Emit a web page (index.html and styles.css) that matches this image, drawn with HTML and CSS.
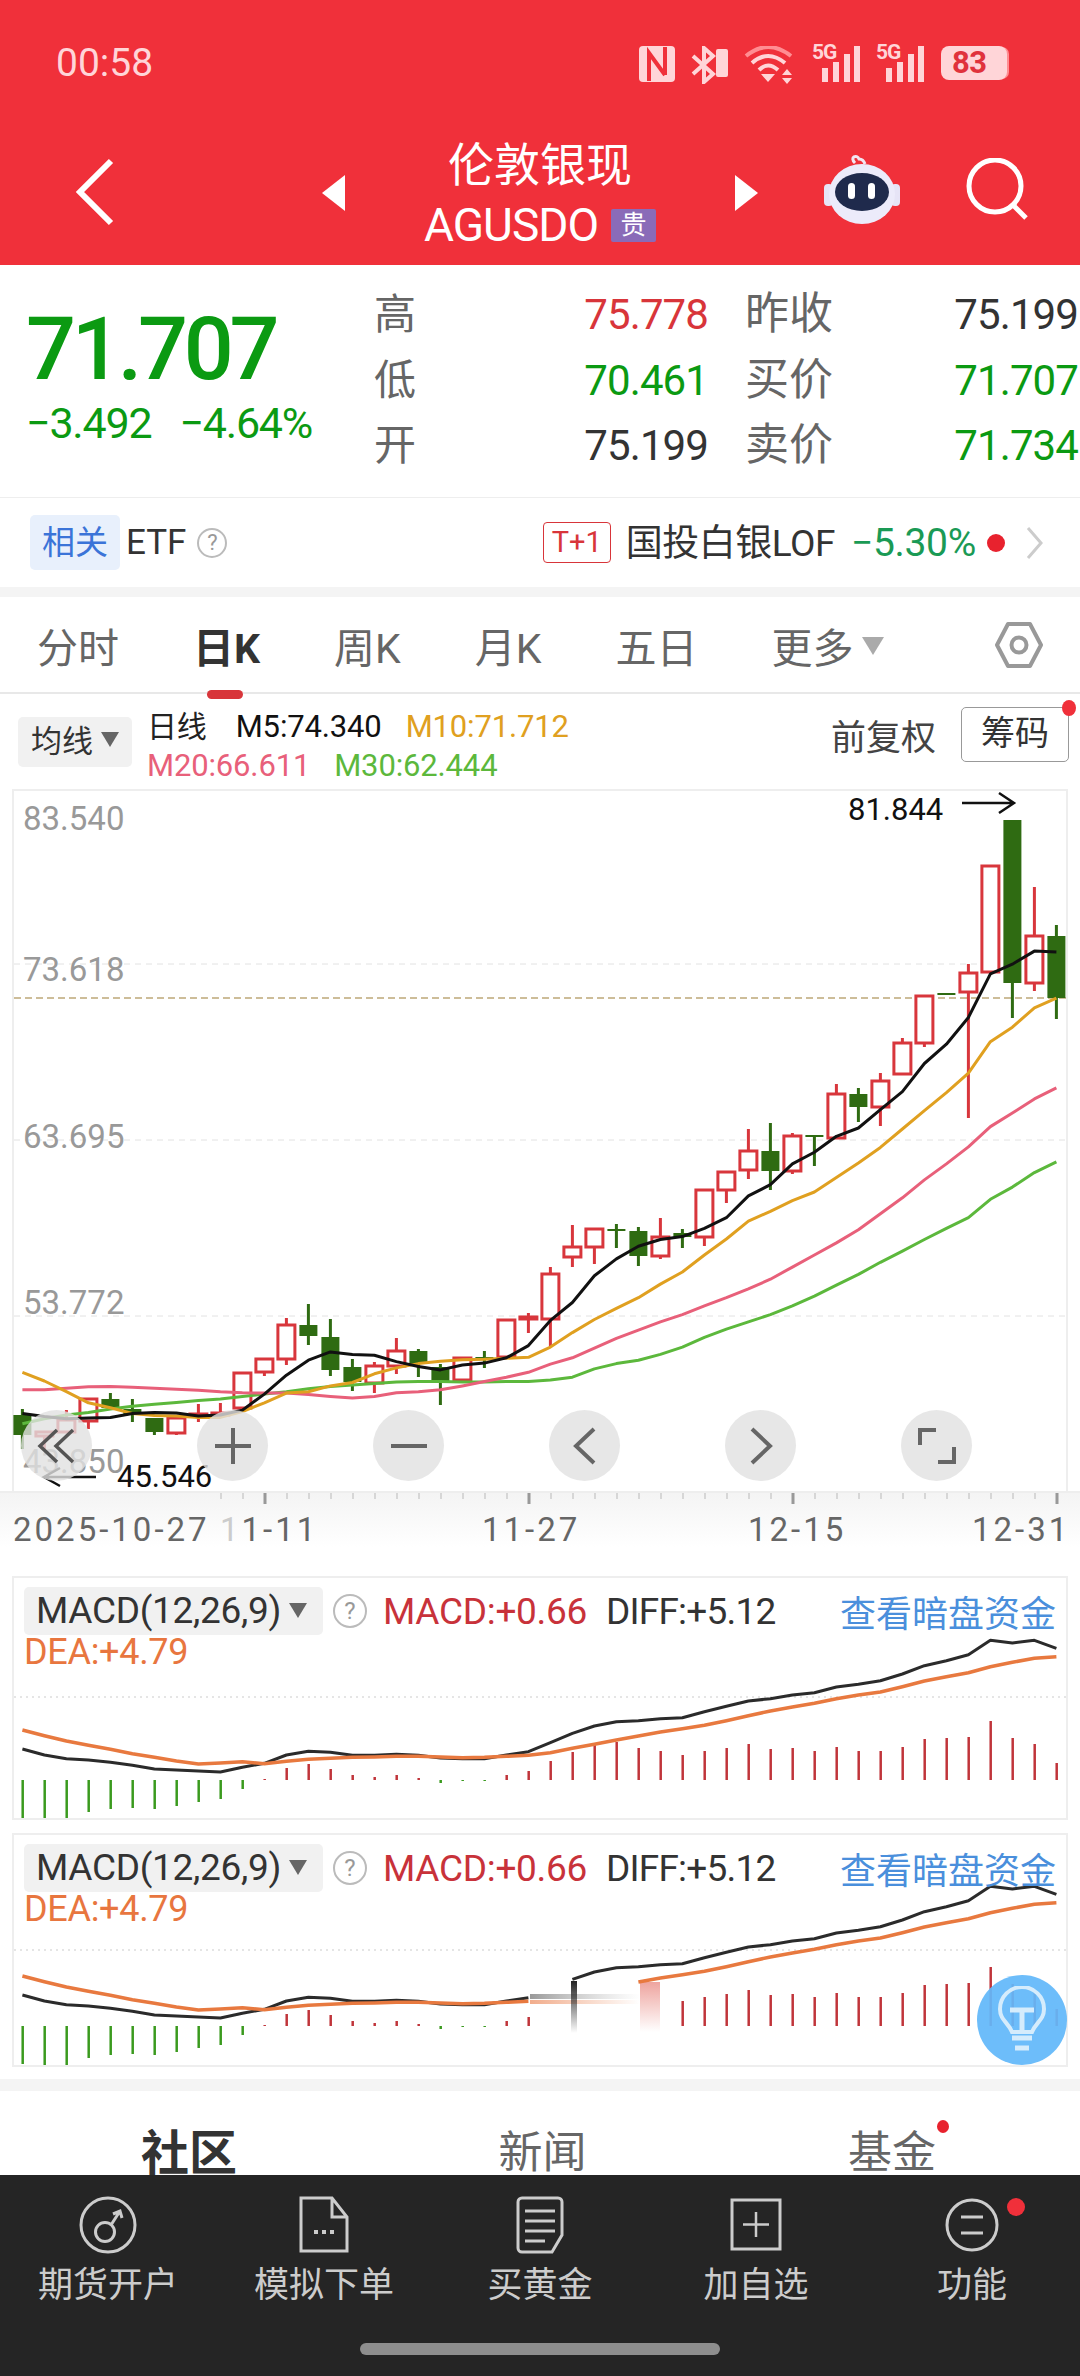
FILE: index.html
```html
<!DOCTYPE html>
<html lang="zh-CN">
<head>
  <meta charset="UTF-8">
  <meta name="viewport" content="width=device-width, initial-scale=1.0">
  <title>伦敦银现 AGUSDO</title>
  <link rel="stylesheet" href="styles.css">
</head>
<body>
<div id="page">

  <header id="top-bar">
    <div class="status-bar">
      <span class="clock">00:58</span>
      <div class="status-icons">
        <svg width="36" height="36" viewBox="0 0 36 36"><rect width="36" height="36" rx="4" fill="#ffd5d8"/><path d="M10 35V7l16 22M26 1v28" fill="none" stroke="#f0303a" stroke-width="4"/></svg>
        <svg width="37" height="38" viewBox="0 0 37 38"><path d="M2 10l20 18-9 8V2l9 8L2 28" fill="none" stroke="#ffd5d8" stroke-width="4"/><rect x="25" y="3" width="12" height="28" rx="2" fill="#ffd5d8"/></svg>
        <svg width="52" height="38" viewBox="0 0 52 38"><path d="M2 10Q24-8 47 10" fill="none" stroke="#ff8d92" stroke-width="4"/><path d="M8 17Q24 3 41 17M15 24Q24 15 34 24" fill="none" stroke="#ffd5d8" stroke-width="4"/><path d="M24 36l-7-8h14zM43 23l5 6H38zM43 38l5-6H38z" fill="#ffd5d8"/></svg>
        <div class="signal"><span class="signal-tag">5G</span><svg width="48" height="36" viewBox="0 0 48 36"><path d="M10 22h6v14h-6zM21 16h6v20h-6zM32 8h6v28h-6zM42 0h6v36h-6z" fill="#ffd5d8"/></svg></div>
        <div class="signal"><span class="signal-tag">5G</span><svg width="48" height="36" viewBox="0 0 48 36"><path d="M10 22h6v14h-6zM21 16h6v20h-6zM32 8h6v28h-6zM42 0h6v36h-6z" fill="#ffd5d8"/></svg></div>
        <div class="battery"><span class="battery-level">83</span></div>
      </div>
    </div>

    <nav class="nav-row">
      <div class="nav-left">
        <svg width="40" height="68" viewBox="0 0 40 68"><path d="M36 3L5 34l31 31" fill="none" stroke="#fff" stroke-width="6"/></svg>
      </div>
      <div class="nav-title">
        <span class="tri tri-left"></span>
        <div class="title-text">
          <h1>伦敦银现</h1>
          <p>AGUSDO<span class="tag-gui">贵</span></p>
        </div>
        <span class="tri tri-right"></span>
      </div>
      <div class="nav-right">
        <svg width="76" height="70" viewBox="0 0 76 70">
          <path d="M31 9c-6-6 2-9 4-4 3 0 5 2 6 5" fill="none" stroke="#f2e6f2" stroke-width="3"/>
          <rect x="0" y="30" width="9" height="22" rx="4" fill="#e6e4f6"/>
          <rect x="67" y="30" width="9" height="22" rx="4" fill="#e6e4f6"/>
          <ellipse cx="38" cy="40" rx="33" ry="30" fill="#ecebfa"/>
          <ellipse cx="38" cy="38" rx="27" ry="19" fill="#1f2a4c"/>
          <rect x="24" y="29" width="7" height="16" rx="3.5" fill="#fff"/>
          <rect x="44" y="29" width="7" height="16" rx="3.5" fill="#fff"/>
        </svg>
        <svg width="64" height="64" viewBox="0 0 64 64"><circle cx="29" cy="28" r="26" fill="none" stroke="#fff" stroke-width="5"/><path d="M47 47l13 13" stroke="#fff" stroke-width="5"/></svg>
      </div>
    </nav>
  </header>

  <section class="quote">
    <div class="quote-main">
      <div class="price">71.707</div>
      <div class="change"><span>−3.492</span><span>−4.64%</span></div>
    </div>
    <div class="quote-table">
      <span class="q-label">高</span><span class="q-val up">75.778</span>
      <span class="q-label q-label-2">昨收</span><span class="q-val">75.199</span>
      <span class="q-label">低</span><span class="q-val down">70.461</span>
      <span class="q-label q-label-2">买价</span><span class="q-val down">71.707</span>
      <span class="q-label">开</span><span class="q-val">75.199</span>
      <span class="q-label q-label-2">卖价</span><span class="q-val down">71.734</span>
    </div>
  </section>

  <section class="etf-row">
    <span class="etf-tag">相关</span>
    <span class="etf-name">ETF</span>
    <span class="help">?</span>
    <div class="etf-right">
      <span class="t1">T+1</span>
      <span class="fund-name">国投白银LOF</span>
      <span class="fund-pct">−5.30%</span>
      <span class="red-dot"></span>
      <svg width="18" height="34" viewBox="0 0 18 34"><path d="M2 2l13 15L2 32" fill="none" stroke="#ccc" stroke-width="3"/></svg>
    </div>
  </section>

  <div class="band"></div>

  <div class="period-tabs">
    <span class="period">分时</span>
    <span class="period active">日K</span>
    <span class="period">周K</span>
    <span class="period">月K</span>
    <span class="period">五日</span>
    <span class="period">更多<i class="caret"></i></span>
    <svg class="hex" width="48" height="46" viewBox="0 0 48 46"><path d="M13 2h22l11 21-11 21H13L2 23z" fill="none" stroke="#999" stroke-width="4" stroke-linejoin="round"/><circle cx="24" cy="23" r="7.5" fill="none" stroke="#999" stroke-width="4"/></svg>
  </div>

  <div class="ma-row">
    <div class="ma-chip">均线<i class="caret caret-dark"></i></div>
    <div class="ma-values">
      <div><span class="ma-day">日线</span><span class="m5">M5:74.340</span><span class="m10">M10:71.712</span></div>
      <div><span class="m20">M20:66.611</span><span class="m30">M30:62.444</span></div>
    </div>
    <div class="ma-right">
      <span class="fq">前复权</span>
      <span class="chips-btn">筹码</span>
    </div>
  </div>

  <div class="kline-frame">
    <svg id="kline" viewBox="14 791 1052 700">
      <g class="grid-lines">
        <path d="M14 964H1066M14 1140H1066M14 1316H1066"/>
      </g>
      <path class="last-line" d="M14 998H1066"/>
      <g id="candles"></g>
      <g id="ma-lines"></g>
      <text class="axis-price" x="23" y="830">83.540</text>
      <text class="axis-price" x="23" y="981">73.618</text>
      <text class="axis-price" x="23" y="1148">63.695</text>
      <text class="axis-price" x="23" y="1314">53.772</text>
      <text class="axis-price" x="23" y="1473">43.850</text>
      <text class="mark" x="848" y="820">81.844</text>
      <path class="mark-arrow" d="M962 803H1013M999 793l15 10-15 10"/>
      <text class="mark" x="117" y="1487">45.546</text>
      <path class="mark-arrow" d="M96 1477H44M60 1468l-16 9 16 9"/>
    </svg>
    <div class="chart-tools">
      <span class="tool"><svg width="40" height="40" viewBox="0 0 40 40"><path d="M20 4L3 20l17 16M36 4L19 20l17 16" fill="none" stroke="#555" stroke-width="3.5"/></svg></span>
      <span class="tool"><svg width="36" height="36" viewBox="0 0 36 36"><path d="M0 18H36M18 0V36" stroke="#666" stroke-width="4"/></svg></span>
      <span class="tool"><svg width="36" height="36" viewBox="0 0 36 36"><path d="M0 18H36" stroke="#666" stroke-width="4"/></svg></span>
      <span class="tool"><svg width="24" height="38" viewBox="0 0 24 38"><path d="M21 2L3 19l18 17" fill="none" stroke="#666" stroke-width="4"/></svg></span>
      <span class="tool"><svg width="24" height="38" viewBox="0 0 24 38"><path d="M3 2l18 17L3 36" fill="none" stroke="#666" stroke-width="4"/></svg></span>
      <span class="tool"><svg width="38" height="38" viewBox="0 0 38 38"><path d="M2 18V3H18M36 20V35H20" fill="none" stroke="#666" stroke-width="4"/></svg></span>
    </div>
  </div>

  <div class="x-axis">
    <svg id="ticks" width="1080" height="12" viewBox="0 0 1080 12"></svg>
    <div class="x-labels">
      <span>2025-10-27</span>
      <span><em>1</em>1-11</span>
      <span>11-27</span>
      <span>12-15</span>
      <span>12-31</span>
    </div>
  </div>

  <section class="macd-panel macd-first">
    <svg id="macd1" class="macd-svg" viewBox="14 1578 1052 240">
      <path class="dots" d="M14 1697H1066"/>
    </svg>
    <div class="macd-head">
      <span class="macd-chip">MACD(12,26,9)<i class="caret caret-dark"></i></span>
      <span class="help help-big">?</span>
      <span class="macd-val">MACD:+0.66</span>
      <span class="diff-val">DIFF:+5.12</span>
      <span class="dark-link">查看暗盘资金</span>
    </div>
    <div class="dea-val">DEA:+4.79</div>
  </section>

  <section class="macd-panel macd-second">
    <svg id="macd2" class="macd-svg" viewBox="14 1835 1052 230">
      <defs>
        <linearGradient id="fade-right" x1="0" x2="1" y1="0" y2="0"><stop offset="0" stop-color="#555" stop-opacity=".6"/><stop offset="1" stop-color="#999" stop-opacity="0"/></linearGradient>
        <linearGradient id="fade-orange" x1="0" x2="1" y1="0" y2="0"><stop offset="0" stop-color="#e8763f" stop-opacity=".6"/><stop offset="1" stop-color="#e8763f" stop-opacity="0"/></linearGradient>
        <linearGradient id="fade-black" x1="0" x2="0" y1="0" y2="1"><stop offset="0" stop-color="#222"/><stop offset="1" stop-color="#222" stop-opacity="0"/></linearGradient>
        <linearGradient id="fade-red" x1="0" x2="0" y1="0" y2="1"><stop offset="0" stop-color="#e05a50" stop-opacity=".55"/><stop offset="1" stop-color="#e05a50" stop-opacity="0"/></linearGradient>
      </defs>
      <path class="dots" d="M14 1950H1066"/>
      <rect x="530" y="1994" width="110" height="5" fill="url(#fade-right)"/>
      <rect x="530" y="2000" width="110" height="4" fill="url(#fade-orange)"/>
      <rect x="571" y="1981" width="6" height="52" fill="url(#fade-black)"/>
      <rect x="640" y="1982" width="20" height="50" fill="url(#fade-red)"/>
    </svg>
    <div class="macd-head">
      <span class="macd-chip">MACD(12,26,9)<i class="caret caret-dark"></i></span>
      <span class="help help-big">?</span>
      <span class="macd-val">MACD:+0.66</span>
      <span class="diff-val">DIFF:+5.12</span>
      <span class="dark-link">查看暗盘资金</span>
    </div>
    <div class="dea-val">DEA:+4.79</div>
    <div class="bulb">
      <svg width="48" height="68" viewBox="0 0 48 68"><path d="M14 46C10 36 2 34 2 23a22 22 0 0 1 44 0c0 11-8 13-12 23z" fill="none" stroke="#d5ecfc" stroke-width="4"/><path d="M12 24H36M24 24V46M14 52H34M17 62H31" fill="none" stroke="#d5ecfc" stroke-width="5"/></svg>
    </div>
  </section>

  <div class="band band-lower"></div>

  <div class="info-tabs">
    <span class="info-tab active">社区</span>
    <span class="info-tab">新闻</span>
    <span class="info-tab has-dot">基金</span>
  </div>

  <footer id="bottom-bar">
    <div class="actions">
      <div class="action">
        <svg width="60" height="60" viewBox="0 0 60 60"><circle cx="30" cy="30" r="27" fill="none" stroke="#ccc" stroke-width="3"/><circle cx="27" cy="37" r="9.5" fill="none" stroke="#ccc" stroke-width="3"/><path d="M33 30l9-14M35 19l7-3 2 7" fill="none" stroke="#ccc" stroke-width="3"/></svg>
        <span>期货开户</span>
      </div>
      <div class="action">
        <svg width="60" height="60" viewBox="0 0 60 60"><path d="M7 3H38L53 22V56H7zM38 3V22H53" fill="none" stroke="#ccc" stroke-width="3"/><path d="M20 35h4v4h-4zM28 35h4v4h-4zM36 35h4v4h-4z" fill="#ccc"/></svg>
        <span>模拟下单</span>
      </div>
      <div class="action">
        <svg width="60" height="60" viewBox="0 0 60 60"><path d="M12 3H48a4 4 0 0 1 4 4V40L42 57H12a4 4 0 0 1-4-4V7a4 4 0 0 1 4-4z" fill="none" stroke="#ccc" stroke-width="3"/><path d="M15 16H45M15 26H45M15 36H45M15 46H35" stroke="#ccc" stroke-width="3"/></svg>
        <span>买黄金</span>
      </div>
      <div class="action">
        <svg width="60" height="60" viewBox="0 0 60 60"><rect x="6" y="5" width="48" height="49" fill="none" stroke="#ccc" stroke-width="3"/><path d="M30 17V42M17 29.500H43" stroke="#ccc" stroke-width="2.500"/></svg>
        <span>加自选</span>
      </div>
      <div class="action has-alert">
        <svg width="60" height="60" viewBox="0 0 60 60"><circle cx="30" cy="30" r="25" fill="none" stroke="#ccc" stroke-width="3"/><path d="M19 22H41M19 38H41" stroke="#ccc" stroke-width="3"/></svg>
        <span>功能</span>
      </div>
    </div>
    <div class="home-bar"></div>
  </footer>

</div>
<script src="script.js"></script>
</body>
</html>
```

FILE: styles.css
```css
* {
  margin: 0;
  padding: 0;
  box-sizing: border-box;
}

html, body {
  background: #fff;
}

body {
  font-family: Roboto, "Noto Sans CJK SC", sans-serif;
  color: #333;
}

#page {
  width: 1080px;
  height: 2376px;
  overflow: hidden;
  position: relative;
}

/* red header */
#top-bar {
  height: 265px;
  background: #f0303a;
  color: #fff;
}

.status-bar {
  height: 127px;
  display: flex;
  justify-content: space-between;
  align-items: flex-start;
  padding: 40px 73px 0 56px;
}

.clock {
  font-size: 39px;
  line-height: 46px;
  color: #ffd5d8;
}

.status-icons {
  display: flex;
  align-items: flex-start;
  gap: 16px;
  padding-top: 6px;
}

.signal {
  position: relative;
  width: 48px;
  height: 36px;
}

.signal-tag {
  position: absolute;
  left: 0;
  top: -5px;
  font-size: 21px;
  font-weight: 700;
  line-height: 22px;
  letter-spacing: -1px;
  color: #ffd5d8;
}

.battery {
  width: 66px;
  height: 34px;
  background: #ffd5d8;
  border-radius: 8px;
  display: flex;
  align-items: center;
  padding-left: 11px;
  margin-left: 1px;
  box-shadow: 3px 0 0 -1px #ff8d92;
}

.battery-level {
  font-size: 31px;
  font-weight: 700;
  line-height: 34px;
  letter-spacing: -.500px;
  color: #e0323c;
}

.nav-row {
  height: 138px;
  display: grid;
  grid-template-columns: 322px 436px 322px;
}

.nav-left {
  padding: 31px 0 0 75px;
}

.nav-title {
  display: flex;
  justify-content: space-between;
  align-items: flex-start;
}

.tri {
  width: 0;
  height: 0;
  margin-top: 48px;
  border-top: 18px solid transparent;
  border-bottom: 18px solid transparent;
}

.tri-left {
  border-right: 23px solid #fff;
}

.tri-right {
  border-left: 23px solid #fff;
}

.title-text {
  text-align: center;
  margin-top: 7px;
}

.title-text h1 {
  font-size: 46px;
  font-weight: 400;
  line-height: 62px;
  letter-spacing: 0;
}

.title-text p {
  display: flex;
  align-items: center;
  font-size: 46px;
  line-height: 58px;
  letter-spacing: -1px;
}

.tag-gui {
  width: 45px;
  height: 33px;
  margin-left: 13px;
  background: #8a6bb8;
  border-radius: 2px;
  font-size: 26px;
  line-height: 33px;
  text-align: center;
  letter-spacing: 0;
}

.nav-right {
  display: flex;
  align-items: flex-start;
  padding: 27px 0 0 66px;
  gap: 66px;
}

.nav-right svg:last-child {
  margin-top: 4px;
}

/* quote block */
.quote {
  height: 232px;
  display: flex;
}

.quote-main {
  width: 374px;
  padding: 44px 0 0 26px;
}

.price {
  font-size: 88px;
  font-weight: 500;
  line-height: 80px;
  letter-spacing: -4.200px;
  color: #0b9a12;
}

.change {
  display: flex;
  gap: 28px;
  margin-top: 9px;
  font-size: 43px;
  line-height: 50px;
  letter-spacing: -1.200px;
  color: #0b9a12;
}

.quote-table {
  display: grid;
  grid-template-columns: 100px 234px 137px 233px;
  grid-auto-rows: 65.500px;
  padding-top: 17px;
  align-items: center;
}

.q-label {
  font-size: 42px;
  color: #666;
  line-height: 65px;
}

.q-label-2 {
  padding-left: 37px;
  font-size: 44px;
  white-space: nowrap;
}

.q-val {
  justify-self: end;
  font-size: 42px;
  letter-spacing: -.900px;
  color: #333;
}

.q-val.up {
  color: #d8353a;
}

.q-val.down {
  color: #0b9a12;
}

/* etf row */
.etf-row {
  height: 90px;
  display: flex;
  align-items: center;
  padding-left: 30px;
  border-top: 1px solid #eee;
}

.etf-tag {
  width: 90px;
  height: 55px;
  background: #e8f0fc;
  border-radius: 5px;
  color: #3b74d8;
  font-size: 33px;
  line-height: 55px;
  text-align: center;
}

.etf-name {
  margin-left: 6px;
  font-size: 35px;
}

.help {
  width: 30px;
  height: 30px;
  margin-left: 11px;
  border: 2px solid #bbb;
  border-radius: 50%;
  color: #999;
  font-size: 22px;
  line-height: 26px;
  text-align: center;
}

.etf-right {
  margin-left: auto;
  padding-right: 36px;
  display: flex;
  align-items: center;
}

.t1 {
  width: 68px;
  height: 41px;
  border: 1.500px solid #d8353a;
  border-radius: 4px;
  color: #d8353a;
  font-size: 29px;
  line-height: 38px;
  text-align: center;
}

.fund-name {
  margin: 0 0 5px 15px;
  font-size: 37px;
  letter-spacing: -.500px;
}

.fund-pct {
  margin-left: 16px;
  font-size: 39px;
  letter-spacing: -.300px;
  color: #1a9a55;
}

.red-dot {
  width: 18px;
  height: 18px;
  margin: 0 21px 0 11px;
  border-radius: 50%;
  background: #e8222e;
}

.band {
  height: 10px;
  background: #f4f4f4;
}

/* period tabs */
.period-tabs {
  height: 97px;
  display: flex;
  align-items: center;
  gap: 74px;
  padding: 0 37px 0 37px;
  border-bottom: 2px solid #e8e8e8;
}

.period {
  position: relative;
  font-size: 41px;
  color: #666;
  white-space: nowrap;
}

.period.active {
  color: #333;
  font-weight: 700;
}

.period.active::after {
  content: "";
  position: absolute;
  left: 14px;
  bottom: -24px;
  width: 36px;
  height: 9px;
  border-radius: 5px;
  background: #d8353a;
}

.caret {
  display: inline-block;
  width: 0;
  height: 0;
  margin-left: 8px;
  vertical-align: 8px;
  border-left: 11px solid transparent;
  border-right: 11px solid transparent;
  border-top: 18px solid #aaa;
}

.caret-dark {
  border-left-width: 9px;
  border-right-width: 9px;
  border-top: 15px solid #666;
  vertical-align: 5px;
}

.hex {
  margin-left: auto;
  margin-right: -3px;
  position: relative;
  left: -3px;
}

/* moving average row */
.ma-row {
  height: 95px;
  display: flex;
  align-items: flex-start;
  padding-left: 18px;
}

.ma-chip {
  width: 114px;
  height: 50px;
  margin-top: 23px;
  background: #f1f1f1;
  border-radius: 5px;
  font-size: 31px;
  line-height: 50px;
  text-align: center;
  white-space: nowrap;
}

.ma-values {
  margin-left: 15px;
  padding-top: 13px;
  font-size: 31px;
  line-height: 39px;
  letter-spacing: -.150px;
}

.ma-values div {
  display: flex;
}

.ma-day {
  margin-right: 29px;
  font-size: 30px;
  color: #222;
}

.m5 {
  margin-right: 24px;
  color: #111;
}

.m10 {
  color: #e0a020;
}

.m20 {
  margin-right: 24px;
  color: #e8607a;
}

.m30 {
  color: #5cb83c;
}

.ma-right {
  margin-left: auto;
  display: flex;
  align-items: center;
  padding: 13px 11px 0 0;
}

.fq {
  font-size: 35px;
  color: #444;
  margin-right: 25px;
}

.chips-btn {
  position: relative;
  width: 108px;
  height: 55px;
  border: 1.500px solid #999;
  border-radius: 5px;
  font-size: 34px;
  line-height: 51px;
  text-align: center;
}

.chips-btn::after {
  content: "";
  position: absolute;
  right: -8px;
  top: -8px;
  width: 14px;
  height: 16px;
  border-radius: 50%;
  background: #f0303a;
}

/* kline chart */
.kline-frame {
  position: relative;
  height: 702px;
  margin: 0 12px 0 12px;
  border: 2px solid #eee;
  border-bottom: none;
}

#kline {
  display: block;
  width: 100%;
  height: 100%;
  overflow: visible;
}

.grid-lines path {
  stroke: #e2e2e2;
  stroke-width: 1;
  stroke-dasharray: 6 5;
  fill: none;
}

.last-line {
  stroke: #bda878;
  stroke-width: 1.500;
  stroke-dasharray: 7 4;
  fill: none;
}

.axis-price {
  font-size: 33px;
  fill: #999;
}

.mark {
  font-size: 31px;
  fill: #111;
}

.mark-arrow {
  fill: none;
  stroke: #111;
  stroke-width: 2.500;
}

.chart-tools {
  position: absolute;
  left: 7px;
  bottom: 10px;
  display: flex;
  gap: 105px;
}

.tool {
  width: 71px;
  height: 71px;
  border-radius: 50%;
  background: rgba(225, 225, 225, .8);
  display: flex;
  align-items: center;
  justify-content: center;
}

/* date axis */
.x-axis {
  height: 85px;
  background: linear-gradient(#f4f4f4, #fff 65%);
  border-top: 2px solid #eee;
}

#ticks {
  display: block;
}

.x-labels {
  display: grid;
  grid-template-columns: 207px 262px 266px 224px auto;
  padding: 5px 0 0 13px;
  font-size: 33px;
  line-height: 40px;
  letter-spacing: 3px;
  color: #666;
  white-space: nowrap;
}

.x-labels em {
  font-style: normal;
  color: #ccc;
}

/* macd panels */
.macd-panel {
  position: relative;
  margin: 0 12px;
  padding: 9px 0 0 10px;
  border: 2px solid #eee;
}

.macd-first {
  height: 244px;
}

.macd-second {
  height: 234px;
  margin-top: 13px;
}

.macd-svg {
  position: absolute;
  left: 0;
  top: 0;
  width: 100%;
  height: 100%;
}

.macd-svg .dots {
  stroke: #ddd;
  stroke-width: 1.500;
  stroke-dasharray: 2 4;
  fill: none;
}

.macd-head {
  position: relative;
  display: flex;
  align-items: center;
  height: 48px;
}

.macd-chip {
  width: 299px;
  height: 48px;
  padding-left: 12px;
  background: #f1f1f1;
  border-radius: 5px;
  font-size: 37px;
  line-height: 48px;
  letter-spacing: -.300px;
  white-space: nowrap;
}

.help-big {
  width: 34px;
  height: 34px;
  margin-left: 10px;
  font-size: 24px;
  line-height: 30px;
  flex-shrink: 0;
}

.macd-val {
  margin-left: 16px;
  font-size: 37px;
  color: #c8323a;
  letter-spacing: -.300px;
  white-space: nowrap;
}

.diff-val {
  margin-left: 19px;
  font-size: 37px;
  color: #333;
  letter-spacing: -.800px;
  white-space: nowrap;
}

.dark-link {
  margin-left: auto;
  margin-right: 10px;
  font-size: 36px;
  color: #4a8fdc;
  white-space: nowrap;
}

.dea-val {
  position: relative;
  margin-top: -5px;
  font-size: 36px;
  line-height: 44px;
  letter-spacing: -.300px;
  color: #e8763f;
}

.bulb {
  position: absolute;
  right: -1px;
  bottom: 0;
  width: 90px;
  height: 90px;
  border-radius: 50%;
  background: rgba(98, 184, 250, .93);
  display: flex;
  align-items: center;
  justify-content: center;
}

.band-lower {
  height: 12px;
  margin-top: 12px;
}

/* bottom tabs */
.info-tabs {
  height: 84px;
  overflow: hidden;
  display: grid;
  grid-template-columns: 374px 360px 346px;
  padding-top: 40px;
}

.info-tab {
  position: relative;
  justify-self: center;
  font-size: 44px;
  line-height: 44px;
  color: #666;
}

.info-tab:first-child {
  justify-self: end;
  margin-right: 137px;
}

.info-tab:nth-child(2) {
  margin-left: -23px;
}

.info-tab:nth-child(3) {
  justify-self: start;
  margin-left: 114px;
}

.info-tab.active {
  font-weight: 700;
  font-size: 48px;
  line-height: 48px;
  margin-top: -1px;
  color: #333;
}

.info-tab.has-dot::after {
  content: "";
  position: absolute;
  right: -13px;
  top: -11px;
  width: 12px;
  height: 13px;
  border-radius: 50%;
  background: #e8222e;
}

#bottom-bar {
  height: 201px;
  background: #252525;
}

.actions {
  display: grid;
  grid-template-columns: repeat(5, 216px);
  padding-top: 20px;
}

.action {
  position: relative;
  display: flex;
  flex-direction: column;
  align-items: center;
  color: #ccc;
  font-size: 35px;
  line-height: 50px;
}

.action span {
  margin-top: 6px;
}

.has-alert::after {
  content: "";
  position: absolute;
  left: 143px;
  top: 3px;
  width: 18px;
  height: 18px;
  border-radius: 50%;
  background: #f0303a;
}

.home-bar {
  width: 360px;
  height: 12px;
  margin: 32px auto 0;
  border-radius: 6px;
  background: #8e8e8e;
}
```

FILE: script.js
```js
// x of candle number i, same spacing in all the charts
const xAt = i => 22.4 + 22 * i;

const RED = '#d8363c';
const GREEN = '#2f6b12';

// up?, wick top, body top, body bottom, wick bottom
const candles = [
  [0, 1409, 1415, 1435, 1449], [1, 1432, 1432, 1436, 1449], [1, 1410, 1420, 1432, 1432], [1, 1399, 1399, 1421, 1429],
  [0, 1393, 1399, 1408, 1408], [0, 1399, 1409, 1415, 1422], [0, 1418, 1418, 1432, 1435], [1, 1418, 1418, 1433, 1435],
  [1, 1404, 1414, 1416, 1422], [1, 1403, 1413, 1415, 1416], [1, 1373, 1373, 1408, 1408], [1, 1359, 1359, 1372, 1376],
  [1, 1318, 1325, 1359, 1365], [0, 1304, 1325, 1336, 1345], [0, 1319, 1337, 1370, 1376], [0, 1359, 1367, 1382, 1391],
  [1, 1362, 1366, 1383, 1393], [1, 1338, 1351, 1366, 1374], [0, 1349, 1351, 1364, 1377], [0, 1364, 1367, 1381, 1405],
  [1, 1358, 1358, 1380, 1383], [0, 1351, 1357, 1359, 1368], [1, 1320, 1320, 1357, 1357], [1, 1313, 1317, 1319, 1333],
  [1, 1267, 1274, 1319, 1346], [1, 1225, 1247, 1257, 1267], [1, 1229, 1229, 1247, 1264], [0, 1224, 1229, 1230, 1248],
  [0, 1227, 1231, 1256, 1266], [1, 1218, 1237, 1256, 1259], [0, 1229, 1233, 1237, 1248], [1, 1190, 1190, 1237, 1246],
  [1, 1172, 1172, 1190, 1203], [1, 1129, 1151, 1170, 1179], [0, 1123, 1151, 1171, 1190], [1, 1133, 1136, 1171, 1174],
  [0, 1135, 1135, 1137, 1166], [1, 1084, 1094, 1138, 1138], [0, 1088, 1094, 1107, 1122], [1, 1073, 1081, 1107, 1126],
  [1, 1038, 1043, 1074, 1074], [1, 996, 996, 1043, 1047], [0, 993, 993, 995, 995], [1, 964, 973, 992, 1118],
  [1, 866, 866, 972, 972], [0, 820, 820, 983, 1018], [1, 887, 936, 983, 991], [0, 925, 936, 998, 1019]
];

// read off at 0.4847px per unit from y = 780
const maLines = {
  '#5cb83c': [1328, 1318, 1310, 1305, 1298, 1292, 1288, 1284, 1280, 1277, 1272, 1267, 1262, 1256, 1251, 1248, 1245, 1242, 1241, 1241, 1242, 1242, 1241, 1241, 1238, 1232, 1215, 1204, 1197, 1185, 1170, 1150, 1133, 1118, 1103, 1085, 1065, 1042, 1020, 995, 972, 948, 925, 903, 865, 840, 810, 788],
  '#e8607a': [1258, 1258, 1255, 1252, 1251, 1253, 1255, 1257, 1259, 1262, 1264, 1265, 1265, 1268, 1272, 1275, 1272, 1264, 1262, 1258, 1250, 1241, 1232, 1222, 1205, 1192, 1172, 1152, 1135, 1118, 1103, 1085, 1068, 1050, 1030, 1005, 980, 955, 928, 895, 862, 825, 792, 757, 715, 687, 658, 635],
  '#e0a020': [1222, 1240, 1262, 1285, 1295, 1307, 1311, 1312, 1315, 1315, 1303, 1285, 1265, 1262, 1250, 1243, 1225, 1213, 1204, 1199, 1196, 1195, 1193, 1191, 1170, 1140, 1113, 1090, 1068, 1040, 1015, 980, 947, 910, 890, 868, 850, 820, 790, 758, 720, 682, 645, 605, 540, 510, 470, 450],
  '#111': [1307, 1313, 1318, 1316, 1315, 1307, 1305, 1306, 1312, 1310, 1300, 1267, 1228, 1197, 1180, 1185, 1187, 1200, 1210, 1217, 1207, 1203, 1192, 1167, 1115, 1078, 1023, 988, 962, 948, 942, 925, 903, 858, 835, 792, 768, 735, 718, 680, 643, 585, 545, 490, 400, 380, 353, 355]
};

// macd values are px from the baseline, + up
const macdBars = [-38, -40, -39, -32, -29, -28, -29, -26, -22, -19, -9, 1, 12, 16, 11, 5, 3, 5, 2, -3, -1, -1, 5, 9, 19, 28, 36, 38, 32, 29, 25, 29, 32, 36, 31, 32, 29, 33, 29, 29, 33, 41, 42, 43, 59, 42, 36, 17];
const diffLine = [567, 585, 596, 600, 607, 616, 627, 630, 633, 636, 622, 610, 585, 574, 577, 586, 586, 583, 586, 594, 596, 596, 585, 575, 548, 520, 498, 485, 482, 476, 473, 455, 439, 423, 416, 405, 398, 381, 373, 362, 342, 317, 302, 284, 241, 249, 241, 265];
const deaLine = [510, 527, 543, 556, 568, 581, 592, 603, 612, 609, 605, 611, 604, 598, 595, 592, 591, 589, 589, 591, 593, 592, 589, 586, 578, 565, 553, 540, 528, 516, 506, 496, 482, 467, 453, 441, 430, 416, 405, 396, 380, 363, 350, 338, 320, 307, 295, 290];

function polyline(points, color, width) {
  const pts = points.map(p => p[0].toFixed(1) + ',' + p[1].toFixed(1)).join(' ');
  return `<polyline points="${pts}" fill="none" stroke="${color}" stroke-width="${width}" stroke-linejoin="round"/>`;
}

let candleHtml = '';
candles.forEach((c, i) => {
  const x = xAt(i);
  const color = c[0] ? RED : GREEN;
  candleHtml += `<path d="M${x} ${c[1]}V${c[4]}" stroke="${color}" stroke-width="3"/>`;
  const h = Math.max(c[3] - c[2], 2);
  if (c[0]) {
    candleHtml += `<rect x="${x - 8.5}" y="${c[2]}" width="17" height="${h}" fill="#fff" stroke="${color}" stroke-width="3"/>`;
  } else {
    candleHtml += `<rect x="${x - 9}" y="${c[2]}" width="18" height="${h}" fill="${color}"/>`;
  }
});
document.getElementById('candles').innerHTML = candleHtml;

let lineHtml = '';
Object.keys(maLines).forEach(color => {
  const pts = maLines[color].map((v, i) => [xAt(i), 780 + v * 0.4847]);
  lineHtml += polyline(pts, color, 3);
});
document.getElementById('ma-lines').innerHTML = lineHtml;

// ticks under the chart
let tickHtml = '';
for (let i = 9; i < 48; i++) {
  const x = xAt(i) + 0.6;
  const major = i === 11 || i === 23 || i === 35 || i === 47;
  tickHtml += `<path d="M${x} 0V${major ? 11 : 6}" stroke="${major ? '#999' : '#ccc'}" stroke-width="${major ? 3 : 1.5}"/>`;
}
document.getElementById('ticks').innerHTML = tickHtml;

function drawMacd(svgId, base, shift, skipBars, diffParts, deaParts) {
  let html = '';
  macdBars.forEach((v, i) => {
    if (i >= skipBars[0] && i <= skipBars[1]) return;
    const x = xAt(i) + 0.3;
    const color = v > 0 ? '#c0343a' : '#3a9a1e';
    html += `<path d="M${x} ${base}V${base - v}" stroke="${color}" stroke-width="2.5"/>`;
  });
  const part = (values, from, to) => {
    const pts = [];
    for (let i = from; i <= to; i++) pts.push([xAt(i), 1560 + values[i] / 3 + shift]);
    return pts;
  };
  diffParts.forEach(r => { html += polyline(part(diffLine, r[0], r[1]), '#2b2b2b', 3); });
  deaParts.forEach(r => { html += polyline(part(deaLine, r[0], r[1]), '#e8793f', 3.5); });
  document.getElementById(svgId).insertAdjacentHTML('beforeend', html);
}

drawMacd('macd1', 1780, 0, [99, 99], [[0, 47]], [[0, 47]]);
// second panel has the smeared part in the middle, see the rects in index.html
drawMacd('macd2', 2026, 246, [24, 29], [[0, 23], [25, 47]], [[0, 23], [28, 47]]);
```
